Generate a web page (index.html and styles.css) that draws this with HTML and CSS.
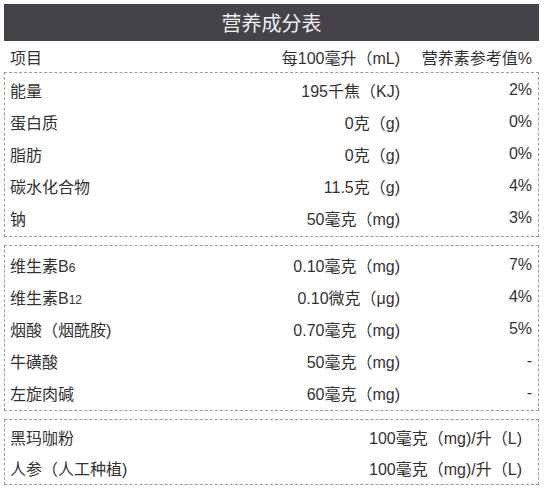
FILE: index.html
```html
<!DOCTYPE html>
<html lang="zh-CN">
<head>
<meta charset="utf-8">
<title>营养成分表</title>
<link rel="stylesheet" href="styles.css">
</head>
<body>
<div class="panel">
  <div class="title">营养成分表</div>
  <div class="row head">
    <span class="name">项目</span>
    <span class="val">每100毫升（mL)</span>
    <span class="pct">营养素参考值%</span>
  </div>
  <div class="box box1">
    <div class="row"><span class="name">能量</span><span class="val">195千焦（KJ)</span><span class="pct">2%</span></div>
    <div class="row"><span class="name">蛋白质</span><span class="val">0克（g)</span><span class="pct">0%</span></div>
    <div class="row"><span class="name">脂肪</span><span class="val">0克（g)</span><span class="pct">0%</span></div>
    <div class="row"><span class="name">碳水化合物</span><span class="val">11.5克（g)</span><span class="pct">4%</span></div>
    <div class="row"><span class="name">钠</span><span class="val">50毫克（mg)</span><span class="pct">3%</span></div>
  </div>
  <div class="box box2">
    <div class="row"><span class="name">维生素B<small class="sub">6</small></span><span class="val">0.10毫克（mg)</span><span class="pct">7%</span></div>
    <div class="row"><span class="name">维生素B<small class="sub">12</small></span><span class="val">0.10微克（μg)</span><span class="pct">4%</span></div>
    <div class="row"><span class="name">烟酸（烟酰胺)</span><span class="val">0.70毫克（mg)</span><span class="pct">5%</span></div>
    <div class="row"><span class="name">牛磺酸</span><span class="val">50毫克（mg)</span><span class="pct">-</span></div>
    <div class="row"><span class="name">左旋肉碱</span><span class="val">60毫克（mg)</span><span class="pct">-</span></div>
  </div>
  <div class="box box3">
    <div class="row2"><span class="name">黑玛咖粉</span><span class="val">100毫克（mg)/升（L)</span></div>
    <div class="row2"><span class="name">人参（人工种植)</span><span class="val">100毫克（mg)/升（L)</span></div>
  </div>
</div>
</body>
</html>
```

FILE: styles.css
```css
html, body {
  margin: 0;
  padding: 0;
  background: #ffffff;
}
body {
  font-family: "Liberation Sans", "Noto Sans CJK SC", sans-serif;
  color: #333333;
  font-size: 16px;
}
.panel {
  width: 535px;
  margin: 4px 0 0 4px;
  display: flex;
  flex-direction: column;
}
.title {
  height: 37px;
  background: #46424a;
  color: #f0f0f0;
  font-size: 20px;
  display: flex;
  align-items: center;
  justify-content: center;
}
.row {
  display: grid;
  grid-template-columns: 1fr auto 132px;
  align-items: center;
  height: 32px;
  padding: 0 6px 0 5px;
}
.row .val { text-align: right; }
.row .pct { text-align: right; }
.head {
  height: 31px;
  padding: 0 7px 0 6px;
}
.box {
  border: 1px dashed #9a9a9a;
  display: flex;
  flex-direction: column;
}
.box1 { padding: 1px 0 2px; }
.box2 { padding: 3px 0 1px; margin-top: 8px; }
.box3 { padding: 1px 0 1px; margin-top: 8px; }
.row2 {
  display: flex;
  justify-content: space-between;
  align-items: center;
  height: 31px;
  padding: 0 16px 0 5px;
}
.sub {
  font-size: 12px;
}
```
